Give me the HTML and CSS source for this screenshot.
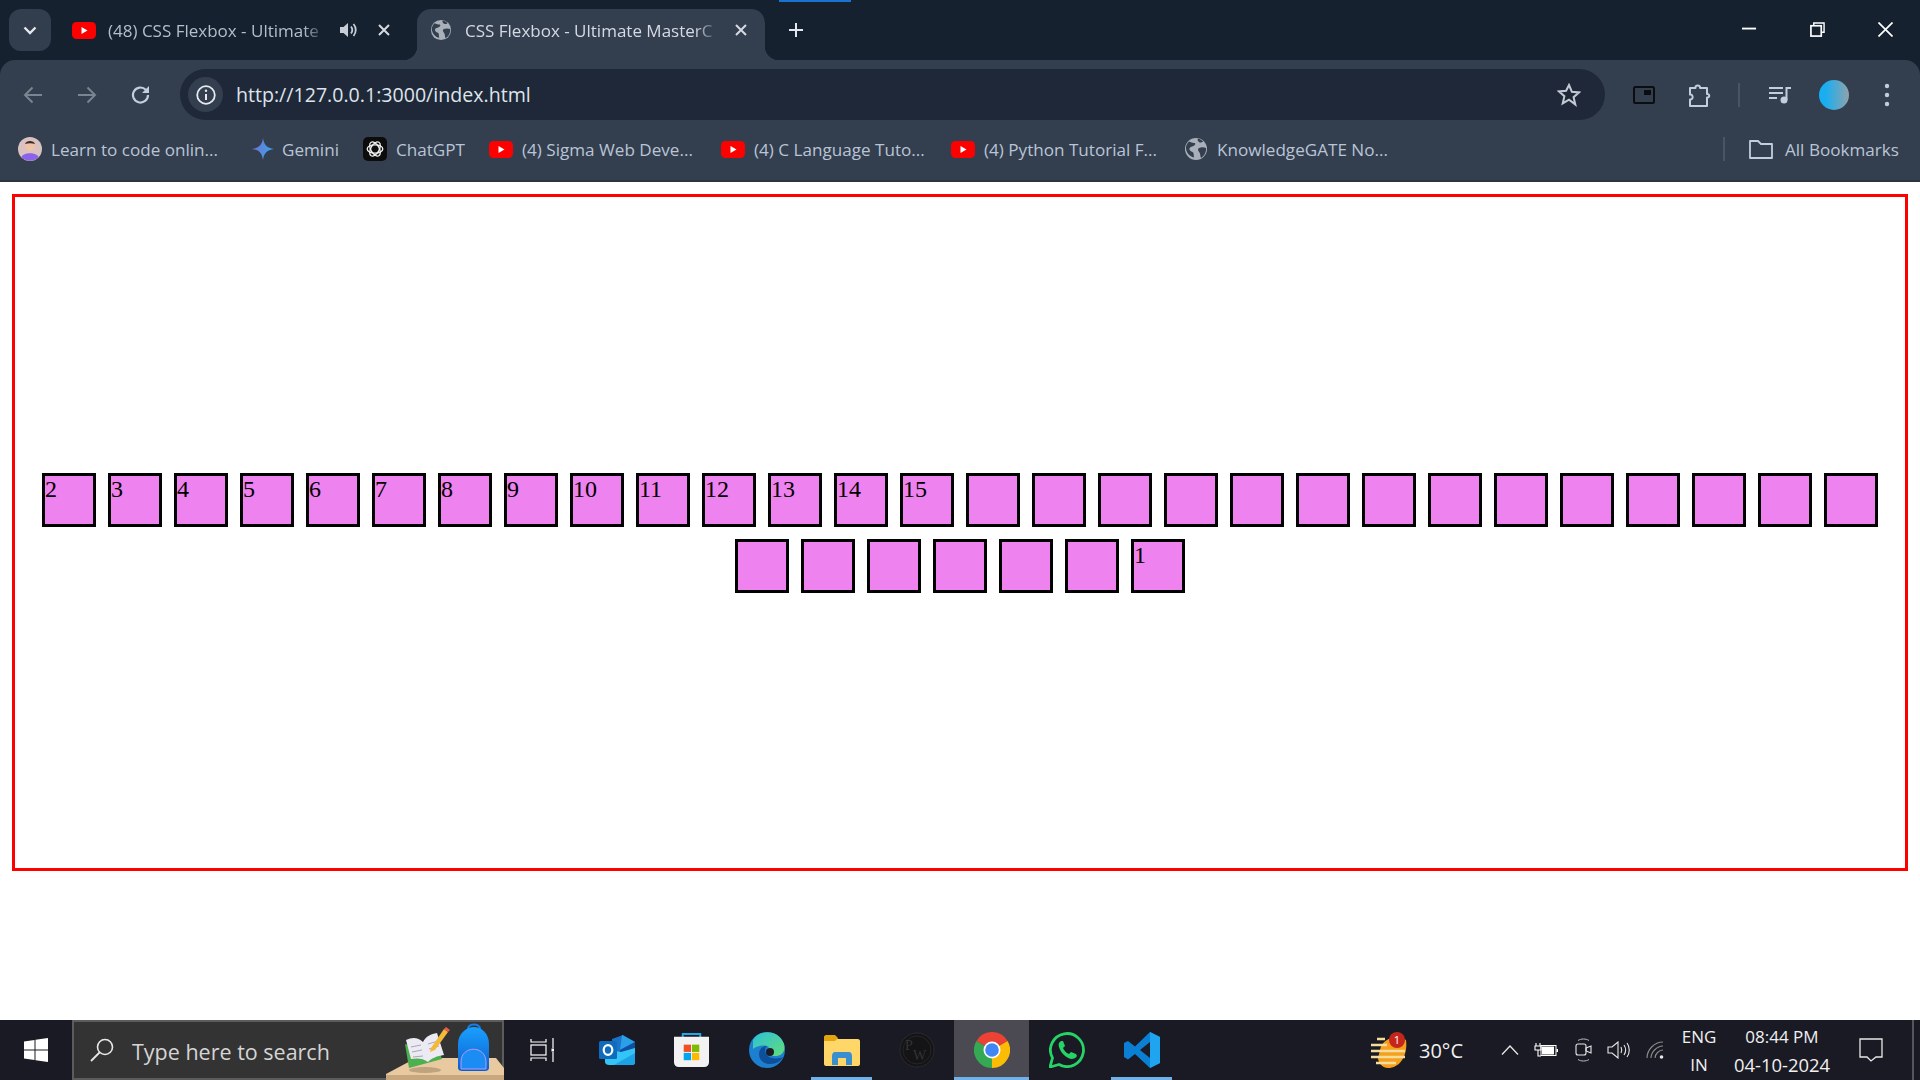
FILE: index.html
```html
<!DOCTYPE html>
<html lang="en">
<head>
<meta charset="utf-8">
<title>CSS Flexbox - Ultimate MasterClass</title>
<link rel="stylesheet" href="styles.css">
</head>
<body>
<svg class="defs" aria-hidden="true">
  <symbol id="yt" viewBox="0 0 24 17"><rect width="24" height="17" rx="4.5" fill="#f00"/><path d="M9.5 5v7l6-3.5z" fill="#fff"/></symbol>
  <symbol id="globe" viewBox="0 0 24 24"><circle cx="12" cy="12" r="11" fill="#a9b0b9"/><path d="M5 4.500c2 .5 3 1.500 5 1.500s1.500 2-.5 3-3.500.5-4 2.500 1.500 3 3 3.500 1 2.500 1.500 5.500C6 20 1.500 15 2 10c.3-2 1.500-4 3-5.500zM15 11c2-1 5-1 7 0 .5 4-2 8.500-5 10-1-2-.5-4-1.500-5.500S13 12.500 15 11zM14 1.500c2 .5 4 1.500 5 3-1 1-3 1.500-4 .5s-2-2-1-3.500z" fill="#333e4f"/></symbol>
  <symbol id="x" viewBox="0 0 12 12"><path d="M1 1l10 10M11 1L1 11" stroke="currentColor" stroke-width="2" fill="none"/></symbol>
</svg>

<header class="browser">
  <div class="tabstrip">
    <div class="tab-search"><svg width="14" height="9" viewBox="0 0 14 9"><path d="M1.500 1.500L7 7l5.500-5.500" stroke="#e4e8ee" stroke-width="2.400" fill="none"/></svg></div>
    <div class="tab">
      <svg class="tab-yt"><use href="#yt"/></svg>
      <span class="tab-title tab-title-a">(48) CSS Flexbox - Ultimate</span>
      <svg class="tab-sound" viewBox="0 0 18 16"><path d="M1 5h3.500L9 1v14l-4.500-4H1z" fill="#c6cdd7"/><path d="M12 4.500c1.500 2 1.500 5 0 7M14.500 2c3 3.500 3 8.500 0 12" stroke="#c6cdd7" stroke-width="1.800" fill="none"/></svg>
      <svg class="tab-close"><use href="#x"/></svg>
    </div>
    <div class="tab tab-active">
      <svg class="tab-globe"><use href="#globe"/></svg>
      <span class="tab-title tab-title-b">CSS Flexbox - Ultimate MasterC</span>
      <svg class="tab-close tab-close-b"><use href="#x"/></svg>
    </div>
    <svg class="tab-new" viewBox="0 0 16 16"><path d="M8 1v14M1 8h14" stroke="#e4e8ee" stroke-width="2" fill="none"/></svg>
    <div class="win-controls">
      <svg class="win-btn" viewBox="0 0 16 16"><path d="M0 7h15" stroke="#fff" stroke-width="2"/></svg>
      <svg class="win-btn" viewBox="0 0 16 16"><path d="M4 4V1h11v10h-3" stroke="#fff" stroke-width="1.500" fill="none"/><rect x="1" y="4" width="11" height="11" stroke="#fff" stroke-width="1.800" fill="none"/></svg>
      <svg class="win-btn" viewBox="0 0 16 16"><path d="M.5.500l15 15M15.500.500l-15 15" stroke="#fff" stroke-width="1.800" fill="none"/></svg>
    </div>
    <div class="loadbar"></div>
  </div>

  <div class="toolbar">
    <div class="nav-cell"><svg width="20" height="18" viewBox="0 0 20 18"><path d="M19 9H2M9.500 1.500L2 9l7.500 7.500" stroke="#7b8591" stroke-width="2" fill="none"/></svg></div>
    <div class="nav-cell"><svg width="20" height="18" viewBox="0 0 20 18"><path d="M1 9h17M10.500 1.500L18 9l-7.500 7.500" stroke="#7b8591" stroke-width="2" fill="none"/></svg></div>
    <div class="nav-cell"><svg width="20" height="20" viewBox="0 0 20 20"><path d="M17 10a7.500 7.500 0 1 1-2.200-5.300L17 7" stroke="#c3cddc" stroke-width="2.200" fill="none"/><path d="M18 1v7h-7z" fill="#c3cddc"/></svg></div>
    <div class="urlbar">
      <div class="url-info"><svg width="20" height="20" viewBox="0 0 20 20"><circle cx="10" cy="10" r="8.800" stroke="#e6e9ee" stroke-width="1.800" fill="none"/><path d="M10 9v6" stroke="#e6e9ee" stroke-width="2"/><circle cx="10" cy="5.800" r="1.200" fill="#e6e9ee"/></svg></div>
      <span class="url-text">http://127.0.0.1:3000/index.html</span>
      <svg class="url-star" viewBox="0 0 24 24"><path d="M12 2l2.900 6.800 7.100.6-5.400 4.800 1.700 7.200L12 16.600l-6.300 3.800 1.700-7.200L2 8.400l7.100-.6z" stroke="#c4cad3" stroke-width="2" fill="none"/></svg>
    </div>
    <svg class="tool-pip" viewBox="0 0 22 18"><rect x="1" y="1" width="20" height="16" rx="1.500" stroke="#0b0d11" stroke-width="2" fill="none"/><rect x="11" y="4" width="7" height="5" fill="#0b0d11"/></svg>
    <svg class="tool-ext" viewBox="0 0 24 24"><path d="M2 5h5.500c-.5-3.500 5-3.500 4.500 0h7v6c3-.5 3 4 0 3.500V23H2v-6.500c3.500.5 3.500-5.500 0-5z" stroke="#c3cddc" stroke-width="2" fill="none" stroke-linejoin="round"/></svg>
    <span class="tool-sep"></span>
    <svg class="tool-queue" viewBox="0 0 24 18"><path d="M1 2h14M1 7h14M1 12h8" stroke="#c3cddc" stroke-width="2"/><circle cx="16" cy="14" r="3.500" fill="#c3cddc"/><path d="M18.500 14V2H23" stroke="#c3cddc" stroke-width="2" fill="none"/></svg>
    <span class="tool-avatar"></span>
    <svg class="tool-dots" viewBox="0 0 6 24"><circle cx="3" cy="3" r="2.200" fill="#c3cddc"/><circle cx="3" cy="12" r="2.200" fill="#c3cddc"/><circle cx="3" cy="21" r="2.200" fill="#c3cddc"/></svg>
  </div>

  <nav class="bookmarks">
    <div class="bm bm-1"><svg class="bm-ico" viewBox="0 0 24 24"><circle cx="12" cy="12" r="12" fill="#d9c2c0"/><circle cx="12" cy="9" r="5" fill="#eec3a8"/><path d="M7 7c1-4 9-4 10 0-3-1-7-1-10 0z" fill="#3a2c2c"/><path d="M3.500 20c2-5 15-5 17 0-4 5-13 5-17 0z" fill="#8b62e8"/></svg><span>Learn to code onlin...</span></div>
    <div class="bm bm-2"><svg class="bm-ico" viewBox="0 0 24 24"><defs><linearGradient id="gem" x1="0" y1="0" x2="1" y2="0.300"><stop offset="0" stop-color="#7d6cc4"/><stop offset="1" stop-color="#3aa0ee"/></linearGradient></defs><path d="M12 1c1 7 4 10 11 11-7 1-10 4-11 11-1-7-4-10-11-11 7-1 10-4 11-11z" fill="url(#gem)"/></svg><span>Gemini</span></div>
    <div class="bm bm-3"><svg class="bm-ico" viewBox="0 0 24 24"><rect width="24" height="24" rx="5" fill="#0c0c0c"/><g stroke="#f2f2f2" stroke-width="1.300" fill="none"><ellipse cx="12" cy="12" rx="7.800" ry="4.200"/><ellipse cx="12" cy="12" rx="7.800" ry="4.200" transform="rotate(60 12 12)"/><ellipse cx="12" cy="12" rx="7.800" ry="4.200" transform="rotate(120 12 12)"/></g></svg><span>ChatGPT</span></div>
    <div class="bm bm-4"><svg class="bm-yt"><use href="#yt"/></svg><span>(4) Sigma Web Deve...</span></div>
    <div class="bm bm-5"><svg class="bm-yt"><use href="#yt"/></svg><span>(4) C Language Tuto...</span></div>
    <div class="bm bm-6"><svg class="bm-yt"><use href="#yt"/></svg><span>(4) Python Tutorial F...</span></div>
    <div class="bm bm-7"><svg class="bm-ico"><use href="#globe"/></svg><span>KnowledgeGATE No...</span></div>
    <span class="bm-sep"></span>
    <div class="bm bm-all"><svg class="bm-ico" viewBox="0 0 24 20"><path d="M1 18V2h8l3 3h11v14H1z" stroke="#c3cddc" stroke-width="1.800" fill="none" stroke-linejoin="round"/></svg><span>All Bookmarks</span></div>
  </nav>
</header>

<main class="page">
  <section class="container">
    <div class="box">2</div><div class="box">3</div><div class="box">4</div><div class="box">5</div><div class="box">6</div><div class="box">7</div><div class="box">8</div><div class="box">9</div><div class="box">10</div><div class="box">11</div><div class="box">12</div><div class="box">13</div><div class="box">14</div><div class="box">15</div>
    <div class="box"></div><div class="box"></div><div class="box"></div><div class="box"></div><div class="box"></div><div class="box"></div><div class="box"></div><div class="box"></div><div class="box"></div><div class="box"></div>
    <div class="box"></div><div class="box"></div><div class="box"></div><div class="box"></div><div class="box"></div><div class="box"></div><div class="box"></div><div class="box"></div><div class="box"></div><div class="box"></div>
    <div class="box">1</div>
  </section>
</main>

<footer class="taskbar">
  <div class="start"><svg width="24" height="24" viewBox="0 0 24 24"><path d="M0 3.500l10.500-1.500v9.500H0zM11.500 1.800L24 0v11.500H11.500zM0 12.500h10.500V22L0 20.500zM11.500 12.500H24V24l-12.500-1.800z" fill="#fff"/></svg></div>
  <div class="search">
    <svg class="search-ico" viewBox="0 0 24 24"><circle cx="15" cy="9" r="7.500" stroke="#e8e8e8" stroke-width="1.600" fill="none"/><path d="M9.500 14.500L1 23" stroke="#e8e8e8" stroke-width="1.800"/></svg>
    <span class="search-text">Type here to search</span>
    <svg class="search-art" viewBox="0 0 120 60">
      <defs><linearGradient id="bag" x1="0" y1="0" x2="0" y2="1"><stop offset="0" stop-color="#1aa0ff"/><stop offset="1" stop-color="#0b5fd0"/></linearGradient></defs>
      <path d="M2 54l30-16h80l8 10v8H2z" fill="#e8c9a0"/><rect x="2" y="55" width="118" height="5" fill="#c8a77e"/>
      <ellipse cx="41" cy="50" rx="16" ry="3" fill="#bfa27e"/>
      <path d="M21 24l4 24 33-9-2-6z" fill="#4caf50"/>
      <path d="M22 20c6-3 12-3 17 2 3-6 8-8 14-9l7 22c-7 1-12 3-16 7-5-4-11-4-17-3z" fill="#eceaf2"/>
      <path d="M27 27l10-2M28 32l10-2M29 37l10-1M44 24l10-3M45 29l10-3" stroke="#a9a6b6" stroke-width="1"/>
      <path d="M47 28L60 9l4 3-13 18-5 2z" fill="#f5b93a"/><path d="M60 9l2-2 4 3-2 2z" fill="#ef5a4c"/>
      <path d="M84 9c0-6 12-6 12 0" stroke="#1780e8" stroke-width="2" fill="none"/>
      <path d="M74 24c0-11 9-17 16-17s15 6 15 17v24c0 2-2 3-4 3H78c-2 0-4-1-4-3z" fill="url(#bag)"/>
      <path d="M77 42c0-17 25-17 25 0v7H77z" fill="#1c8cf5" stroke="#b69cf5" stroke-width="1"/>
    </svg>
  </div>
  <div class="task"><svg class="ti-view" viewBox="0 0 24 24"><path d="M1 1v3h15V1M1 23v-3h15v3" stroke="#fff" stroke-width="1.200" fill="none"/><rect x="1" y="7" width="15" height="10" stroke="#fff" stroke-width="1.200" fill="none"/><path d="M23 0v10M23 14v10" stroke="#fff" stroke-width="1.200"/><rect x="21.500" y="10.500" width="3" height="3" fill="#fff"/></svg></div>
  <div class="task"><svg class="ti-outlook" viewBox="0 0 36 30"><path d="M13 4L24 0l12 7v10L14 17z" fill="#1a72c9"/><path d="M23 0l13 7-15 8z" fill="#2aa0e8"/><path d="M21 15l15-8v6L21 20z" fill="#0f4fa0"/><path d="M6 14l16 3 14-4v14c0 2-1 3-3 3H10c-2 0-4-1-4-3z" fill="#34c4f5"/><path d="M15 30l21-12v9c0 2-1 3-3 3z" fill="#1aa4e6"/><rect y="6" width="18" height="18" rx="1.500" fill="#0f6cbd"/><ellipse cx="9" cy="15" rx="4.300" ry="4.800" stroke="#fff" stroke-width="2.200" fill="none"/></svg></div>
  <div class="task"><svg class="ti-store" viewBox="0 0 36 36"><path d="M9 7V2h18v5" stroke="#1fa7e8" stroke-width="2" fill="none"/><path d="M0 5h36v26c0 3-2 5-5 5H5c-3 0-5-2-5-5z" fill="#f2f2f2"/><rect x="10" y="13" width="7.500" height="7.500" fill="#f25022"/><rect x="18.500" y="13" width="7.500" height="7.500" fill="#7fba00"/><rect x="10" y="21.500" width="7.500" height="7.500" fill="#00a4ef"/><rect x="18.500" y="21.500" width="7.500" height="7.500" fill="#ffb900"/></svg></div>
  <div class="task"><svg class="ti-app" viewBox="0 0 36 36"><defs><linearGradient id="edg" x1="0" y1="0" x2="1" y2="1"><stop offset="0" stop-color="#2cc0d8"/><stop offset="1" stop-color="#63dc7a"/></linearGradient></defs><circle cx="18" cy="18" r="18" fill="#1d7fcf"/><path d="M4 8C10-3 30-3 35 12c2 8-3 12-9 12-5 0-8-2-8-5 0-2 1-3 2-4-5-3-12-1-16 2 0-3 0-6 0-9z" fill="url(#edg)"/><path d="M27 31c-9 3-17-1-17-9 0-5 4-8 8-8-3 2-3 10 5 12 4 1 9 0 11-1-1 2-4 5-7 6z" fill="#0e4f9a"/><circle cx="21" cy="20" r="4" fill="#1c1c26"/></svg></div>
  <div class="task task-on"><svg class="ti-app" viewBox="0 0 36 36"><path d="M0 6c0-1 1-2 2-2h9l3 3h20c1 0 2 1 2 2v23c0 1-1 2-2 2H2c-1 0-2-1-2-2z" fill="#ffd668"/><path d="M0 5c0-1 1-2 2-2h9l3 3-3 3H0z" fill="#e2a50e"/><path d="M8 33v-9c0-2 1-4 3-4h14c2 0 3 2 3 4v9h-6v-7h-8v7z" fill="#3a8fd0"/></svg></div>
  <div class="task"><svg class="ti-app" viewBox="0 0 36 36"><circle cx="18" cy="18" r="17" fill="#141416" stroke="#2a2a2c" stroke-width="1"/><circle cx="18" cy="18" r="14" fill="none" stroke="#2a2a2c" stroke-width=".8"/><text class="pw-text" x="6" y="18">P</text><text class="pw-text" x="14" y="28">W</text></svg></div>
  <div class="task task-on task-active"><svg class="ti-app" viewBox="0 0 36 36"><path d="M18 18L2.400 9A18 18 0 0 1 33.600 9z" fill="#ea4335"/><path d="M18 18L33.600 9A18 18 0 0 1 18 36z" fill="#fbbc05"/><path d="M18 18L18 36A18 18 0 0 1 2.400 9z" fill="#34a853"/><circle cx="18" cy="18" r="8.500" fill="#fff"/><circle cx="18" cy="18" r="6.800" fill="#4285f4"/></svg></div>
  <div class="task"><svg class="ti-app" viewBox="0 0 36 36"><path d="M1 35l2.500-9A16.500 16.500 0 1 1 10 32.500z" stroke="#25d366" stroke-width="2.800" fill="none" stroke-linejoin="round"/><path d="M12 9c-2 1-3 3-2 6 2 6 6 10 12 12 3 0 5-1 6-3l-1-2-5-2-2 2c-3-1-5-4-6-6l2-2-2-5z" fill="#25d366"/></svg></div>
  <div class="task task-on"><svg class="ti-app" viewBox="0 0 36 36"><path d="M26 0l10 5v26l-10 5-15-14-7 5.500L0 25V11l4-2 7 5.500z" fill="#0a7fd4"/><path d="M26 0l10 5v26l-10 5z" fill="#1fa4f0"/><path d="M26 10v16l-10-8z" fill="#1c1c26"/></svg></div>

  <div class="tray">
    <svg class="tr-weather" viewBox="0 0 37 36"><path d="M10 18C12 6 28 2 36 8c2 14-5 28-18 28C12 36 8 30 8 26z" fill="#f59f1e"/><path d="M7 7h8M1 13h16M1 19h34M1 25h34M6 31h20" stroke="#f4dd9a" stroke-width="2.500"/><circle cx="27" cy="8" r="8" fill="#c4261c"/><text class="tr-badge" x="27" y="12">1</text></svg>
    <span class="tr-temp">30°C</span>
    <svg class="tr-chev" viewBox="0 0 18 10"><path d="M1 9.500L9 1l8 8.500" stroke="#e8e8e8" stroke-width="1.300" fill="none"/></svg>
    <svg class="tr-batt" viewBox="0 0 24 14"><path d="M2 0v3M6 0v3M1 3h6v4H1zM4 7v6h3" stroke="#fff" stroke-width="1.100" fill="none"/><rect x="7" y="2.500" width="15" height="10" stroke="#fff" fill="none"/><rect x="8" y="3.500" width="12" height="8" fill="#fff"/><rect x="22.500" y="6" width="1.500" height="3" fill="#fff"/></svg>
    <svg class="tr-cam" viewBox="0 0 17 24"><rect x="1" y="6" width="10" height="11" rx="2" stroke="#e8e8e8" stroke-width="1.100" fill="none"/><path d="M11 10l5-2v7l-5-2z" stroke="#e8e8e8" stroke-width="1.100" fill="none"/><path d="M3 2.500c3-2 8-2 11 0M3 21.500c3 2 8 2 11 0" stroke="#bbb" stroke-width="1" fill="none"/></svg>
    <svg class="tr-vol" viewBox="0 0 23 18"><path d="M1 6h4l6-5v16l-6-5H1z" stroke="#e8e8e8" stroke-width="1.100" fill="none"/><path d="M14 6c1 2 1 4 0 6M17 4c2 3 2 7 0 10M20 2c3 4 3 10 0 14" stroke="#e8e8e8" stroke-width="1.100" fill="none"/></svg>
    <svg class="tr-wifi" viewBox="0 0 18 18"><path d="M1 17C1 9 8 1 17 1M5 17c0-6 6-12 12-12M9 17c0-4 4-8 8-8" stroke="#8d8d8d" stroke-width="1.100" fill="none"/><circle cx="15.500" cy="16" r="1.800" fill="#e8e8e8"/></svg>
    <div class="tr-lines tr-lang"><span>ENG</span><span>IN</span></div>
    <div class="tr-lines tr-clock"><span>08:44 PM</span><span class="tr-date">04-10-2024</span></div>
    <svg class="tr-note" viewBox="0 0 24 24"><path d="M1 1h22v18h-6l-5 4-4-4H1z" stroke="#e8e8e8" stroke-width="1.300" fill="none"/></svg>
    <span class="tr-edge"></span>
  </div>
</footer>
</body>
</html>
```
FILE: styles.css
```css
* { box-sizing: border-box; }
html, body { height: 100%; }
body {
  margin: 0;
  display: flex;
  flex-direction: column;
  height: 1080px;
  overflow: hidden;
  background: #fff;
  font-family: "Open Sans", "Noto Sans", sans-serif;
}
.defs { width: 0; height: 0; position: absolute; }
svg { display: block; flex: none; }

/* browser */
.browser { flex: none; height: 182px; background: #162130; }
.tabstrip { position: relative; display: flex; height: 60px; padding-left: 9px; color: #c4ccd6; }
.loadbar { position: absolute; left: 779px; top: 0; width: 72px; height: 2px; background: #1a73d0; }
.tab-search { width: 42px; height: 42px; margin-top: 9px; border-radius: 12px; background: #323d4d; display: flex; align-items: center; justify-content: center; }
.tab { display: flex; align-items: center; width: 366px; height: 51px; margin-top: 9px; padding: 0 0 9px 21px; font-size: 17px; white-space: nowrap; }
.tab-yt { width: 24px; height: 17px; }
.tab-title { display: block; margin-left: 12px; -webkit-mask-image: linear-gradient(to right, #000 90%, transparent 100%); mask-image: linear-gradient(to right, #000 90%, transparent 100%); }
.tab-title-a { width: 218px; color: #b5bec9; }
.tab-title-b { width: 255px; color: #d5dae2; }
.tab-sound { width: 18px; height: 16px; margin-left: 13px; }
.tab-close { width: 12px; height: 12px; margin-left: 21px; color: #d5dae2; }
.tab-close-b { margin-left: 15px; }
.tab-active { position: relative; width: 348px; padding: 0 0 9px 13px; background: #333e4f; border-radius: 14px 14px 0 0; }
.tab-active::before, .tab-active::after { content: ""; position: absolute; bottom: 0; width: 14px; height: 14px; }
.tab-active::before { left: -14px; background: radial-gradient(circle at 0 0, #162130 14px, #333e4f 14.500px); }
.tab-active::after { right: -14px; background: radial-gradient(circle at 100% 0, #162130 14px, #333e4f 14.500px); }
.tab-globe { width: 22px; height: 22px; }
.tab-active .tab-title { margin-left: 13px; }
.tab-new { width: 16px; height: 16px; margin: 22px 0 0 23px; }
.win-controls { display: flex; margin-left: auto; padding: 22px 27px 0 0; gap: 53px; }
.win-btn { width: 15px; height: 15px; }

.toolbar { display: flex; align-items: center; height: 60px; padding: 9px 0 0 6px; background: #333e4f; border-radius: 15px 15px 0 0; }
.nav-cell { display: flex; width: 54px; justify-content: center; }
.urlbar { display: flex; align-items: center; width: 1425px; height: 51px; margin: 0 0 0 12px; padding: 0 24px 0 8px; border-radius: 26px; background: #1e2838; }
.url-info { display: flex; align-items: center; justify-content: center; width: 35px; height: 35px; border-radius: 50%; background: #333e4f; }
.url-text { margin-left: 13px; color: #dfe4ea; font-size: 19.600px; }
.url-star { width: 24px; height: 24px; margin-left: auto; }
.tool-pip { width: 22px; height: 18px; margin-left: 28px; }
.tool-ext { width: 24px; height: 26px; margin-left: 33px; }
.tool-sep { width: 2px; height: 24px; margin-left: 26px; background: #4a5464; }
.tool-queue { width: 24px; height: 18px; margin-left: 28px; }
.tool-avatar { width: 30px; height: 30px; margin-left: 27px; border-radius: 50%; background: linear-gradient(to right, #18aef2 20%, #8fa3ac 100%); }
.tool-dots { width: 6px; height: 24px; margin-left: 35px; }

.bookmarks { display: flex; align-items: center; height: 62px; padding-bottom: 2px; background: #333e4f; border-bottom: 2px solid #2c3643; font-size: 17.100px; color: #b9c5d5; white-space: nowrap; }
.bm { display: flex; align-items: center; flex: none; }
.bm-ico { width: 24px; height: 24px; }
.bm-yt { width: 24px; height: 17px; }
.bm span { margin-left: 9px; }
.bm-1 { width: 251px; padding-left: 18px; }
.bm-2 { width: 112px; }
.bm-3 { width: 126px; }
.bm-4 { width: 232px; }
.bm-5 { width: 230px; }
.bm-6 { width: 233px; }
.bm-7 { width: 539px; }
.bm-sep { width: 2px; height: 24px; background: #4a5464; }
.bm-all { margin-left: 24px; }
.bm-all span { margin-left: 12px; }
.bm-2 span { margin-left: 7px; }

/* page */
.page { flex: 1; padding: 12px 12px 0; }
.container { display: flex; flex-wrap: wrap; justify-content: center; align-content: center; gap: 12px; height: 677px; border: 3px solid #f00; }
.box { width: 54px; height: 54px; border: 3px solid #000; background: #ee82ee; color: #000; font: 24px "Liberation Serif", serif; }

/* taskbar */
.taskbar { flex: none; display: flex; height: 60px; background: #1a1a24; color: #f0f0f0; }
.start { display: flex; align-items: center; width: 72px; padding: 0 0 0 24px; }
.search { display: flex; align-items: center; width: 432px; border: 2px solid #5c5c5c; background: #333; color: #d5d5d5; }
.search-ico { width: 24px; height: 24px; margin-left: 16px; }
.search-text { margin: 3px 0 0 18px; font-size: 21.500px; white-space: nowrap; }
.search-art { width: 120px; height: 60px; margin: 0 -2px -2px auto; align-self: flex-end; }
.task { display: flex; align-items: center; justify-content: center; position: relative; width: 75px; padding-bottom: 1px; }
.task-on::after { content: ""; position: absolute; left: 7px; right: 7px; bottom: 0; height: 3px; background: #6fb1e8; }
.task-active { background: #4b4952; }
.task-active::after { left: 0; right: 0; }
.ti-view { width: 24px; height: 24px; }
.ti-outlook { width: 36px; height: 30px; }
.ti-store { width: 35px; height: 35px; }
.ti-app { width: 36px; height: 36px; }
.pw-text { font: 14px "Liberation Serif", serif; fill: #333; }

.tray { display: flex; align-items: center; margin-left: auto; padding-right: 6px; }
.tr-weather { width: 37px; height: 36px; }
.tr-temp { width: 43px; margin-left: 12px; font-size: 20px; white-space: nowrap; }
.tr-badge { font: 11px "Open Sans", sans-serif; fill: #fff; text-anchor: middle; }
.tr-chev { width: 18px; height: 10px; margin-left: 39px; }
.tr-batt { width: 24px; height: 14px; margin-left: 15px; }
.tr-cam { width: 17px; height: 24px; margin-left: 17px; }
.tr-vol { width: 23px; height: 18px; margin-left: 15px; }
.tr-wifi { width: 18px; height: 18px; margin-left: 16px; }
.tr-lines { display: flex; flex-direction: column; align-items: center; gap: 6px; padding-top: 2px; font-size: 17px; line-height: 22px; white-space: nowrap; }
.tr-date { font-size: 18.400px; }
.tr-lang { width: 40px; margin-left: 15px; }
.tr-clock { width: 100px; margin-left: 13px; }
.tr-note { width: 24px; height: 24px; margin-left: 27px; }
.tr-edge { width: 2px; height: 60px; margin-left: 29px; background: #55555c; }
```
